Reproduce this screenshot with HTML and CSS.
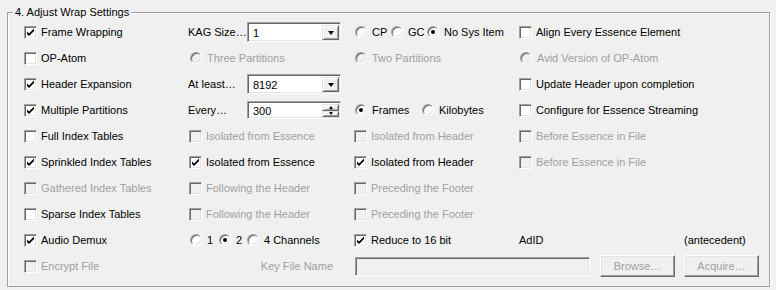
FILE: index.html
```html
<!DOCTYPE html>
<html>
<head>
<meta charset="utf-8">
<link rel="stylesheet" href="styles.css">
</head>
<body>
<fieldset class="group">
  <legend class="title">4. Adjust Wrap Settings</legend>
  <div class="grid">
    <!-- row 1 -->
    <label class="chk"><span class="box"><svg class="mark" viewBox="0 0 11 11"><path d="M2 4.5 L2 7 L4 9 L9 4 L9 1.5 L4 6.5 Z"/></svg></span>Frame Wrapping</label>
    <div class="field"><span class="flabel">KAG Size…</span><div class="combo"><span class="val">1</span><span class="drop"><span class="tri"></span></span></div></div>
    <div class="radios c3">
      <label class="rad w36"><span class="circle"></span>CP</label>
      <label class="rad w36"><span class="circle"></span>GC</label>
      <label class="rad"><span class="circle on"></span>No Sys Item</label>
    </div>
    <label class="chk"><span class="box"></span>Align Every Essence Element</label>

    <!-- row 2 -->
    <label class="chk"><span class="box"></span>OP-Atom</label>
    <label class="rad dis c2r"><span class="circle"></span>Three Partitions</label>
    <label class="rad dis c3"><span class="circle"></span>Two Partitions</label>
    <label class="rad dis c4r"><span class="circle"></span>Avid Version of OP-Atom</label>

    <!-- row 3 -->
    <label class="chk"><span class="box"><svg class="mark" viewBox="0 0 11 11"><path d="M2 4.5 L2 7 L4 9 L9 4 L9 1.5 L4 6.5 Z"/></svg></span>Header Expansion</label>
    <div class="field"><span class="flabel">At least…</span><div class="combo"><span class="val">8192</span><span class="drop"><span class="tri"></span></span></div></div>
    <span></span>
    <label class="chk"><span class="box"></span>Update Header upon completion</label>

    <!-- row 4 -->
    <label class="chk"><span class="box"><svg class="mark" viewBox="0 0 11 11"><path d="M2 4.5 L2 7 L4 9 L9 4 L9 1.5 L4 6.5 Z"/></svg></span>Multiple Partitions</label>
    <div class="field"><span class="flabel">Every…</span><div class="spin"><span class="val">300</span><span class="spinbtns"><span class="sb"><span class="tri up"></span></span><span class="sb"><span class="tri sm"></span></span></span></div></div>
    <div class="radios c3">
      <label class="rad w67"><span class="circle on"></span>Frames</label>
      <label class="rad"><span class="circle"></span>Kilobytes</label>
    </div>
    <label class="chk"><span class="box"></span>Configure for Essence Streaming</label>

    <!-- row 5 -->
    <label class="chk"><span class="box"></span>Full Index Tables</label>
    <label class="chk dis c2"><span class="box"></span>Isolated from Essence</label>
    <label class="chk dis"><span class="box"></span>Isolated from Header</label>
    <label class="chk dis"><span class="box"></span>Before Essence in File</label>

    <!-- row 6 -->
    <label class="chk"><span class="box"><svg class="mark" viewBox="0 0 11 11"><path d="M2 4.5 L2 7 L4 9 L9 4 L9 1.5 L4 6.5 Z"/></svg></span>Sprinkled Index Tables</label>
    <label class="chk c2"><span class="box"><svg class="mark" viewBox="0 0 11 11"><path d="M2 4.5 L2 7 L4 9 L9 4 L9 1.5 L4 6.5 Z"/></svg></span>Isolated from Essence</label>
    <label class="chk"><span class="box"><svg class="mark" viewBox="0 0 11 11"><path d="M2 4.5 L2 7 L4 9 L9 4 L9 1.5 L4 6.5 Z"/></svg></span>Isolated from Header</label>
    <label class="chk dis"><span class="box"></span>Before Essence in File</label>

    <!-- row 7 -->
    <label class="chk dis"><span class="box"></span>Gathered Index Tables</label>
    <label class="chk dis c2"><span class="box"></span>Following the Header</label>
    <label class="chk dis"><span class="box"></span>Preceding the Footer</label>
    <span></span>

    <!-- row 8 -->
    <label class="chk"><span class="box"></span>Sparse Index Tables</label>
    <label class="chk dis c2"><span class="box"></span>Following the Header</label>
    <label class="chk dis"><span class="box"></span>Preceding the Footer</label>
    <span></span>

    <!-- row 9 -->
    <label class="chk"><span class="box"><svg class="mark" viewBox="0 0 11 11"><path d="M2 4.5 L2 7 L4 9 L9 4 L9 1.5 L4 6.5 Z"/></svg></span>Audio Demux</label>
    <div class="radios c2r">
      <label class="rad w29"><span class="circle"></span>1</label>
      <label class="rad w28"><span class="circle on"></span>2</label>
      <label class="rad"><span class="circle"></span>4 Channels</label>
    </div>
    <label class="chk"><span class="box"><svg class="mark" viewBox="0 0 11 11"><path d="M2 4.5 L2 7 L4 9 L9 4 L9 1.5 L4 6.5 Z"/></svg></span>Reduce to 16 bit</label>
    <div class="adid"><span class="adlabel">AdID</span><span>(antecedent)</span></div>

    <!-- row 10 -->
    <label class="chk dis"><span class="box"></span>Encrypt File</label>
    <span class="keylabel dis">Key File Name</span>
    <div class="keyrow">
      <span class="textbox"></span>
      <button class="btn" disabled>Browse…</button>
      <button class="btn" disabled>Acquire…</button>
    </div>
  </div>
</fieldset>
</body>
</html>
```

FILE: styles.css
```css
* { box-sizing: border-box; }

html, body {
  margin: 0;
  background: #f0f0f0;
}

body {
  font: 11px "Liberation Sans", Arial, sans-serif;
  color: #000;
}

.group {
  margin: 6px 6px 0 7px;
  padding: 0 0 7px 0;
  border: 1px solid #a0a0a0;
  box-shadow: inset 1px 1px 0 #fff, 1px 1px 0 #fff;
  min-width: 0;
}

.title {
  margin-left: 5px;
  padding: 0 2px;
  line-height: 13px;
  height: 13px;
}

.grid {
  display: grid;
  grid-template-columns: 164px 166px 165px 1fr;
  grid-auto-rows: 26px;
  align-items: center;
  padding-left: 16px;
}

.chk, .rad {
  display: flex;
  align-items: center;
  white-space: nowrap;
}

.chk { gap: 4px; }
.rad { gap: 5px; }

.c2 { margin-left: 1px; }
.c2r { margin-left: 2px; }
.c3 { margin-left: 1px; }
.c4r { margin-left: 1px; }

.dis { color: #a0a0a0; }

.box {
  width: 13px;
  height: 13px;
  flex: none;
  background: #fff;
  border: 1px solid;
  border-color: #a0a0a0 #fff #fff #a0a0a0;
  box-shadow: inset 1px 1px 0 #696969, inset -1px -1px 0 #e3e3e3;
  display: flex;
  align-items: center;
  justify-content: center;
}

.dis .box { background: #f0f0f0; }

.mark {
  width: 11px;
  height: 11px;
  fill: #000;
}

.circle {
  width: 12px;
  height: 12px;
  flex: none;
  border-radius: 50%;
  background: #fff;
  border: 1px solid;
  border-color: #a0a0a0 #fff #fff #a0a0a0;
  box-shadow: inset 1px 1px 0 #696969, inset -1px -1px 0 #e3e3e3;
  display: flex;
  align-items: center;
  justify-content: center;
}

.dis .circle { background: #f0f0f0; }

.circle.on::after {
  content: "";
  width: 4px;
  height: 4px;
  border-radius: 50%;
  background: #000;
}

.radios {
  display: flex;
  align-items: center;
}

.w36 { width: 36px; }
.w67 { width: 67px; }
.w29 { width: 29px; }
.w28 { width: 28px; }

.field {
  display: flex;
  align-items: center;
}

.flabel {
  width: 59px;
  flex: none;
  white-space: nowrap;
}

.combo, .spin {
  width: 94px;
  height: 20px;
  background: #fff;
  border: 1px solid;
  border-color: #a0a0a0 #fff #fff #a0a0a0;
  box-shadow: inset 1px 1px 0 #696969, inset -1px -1px 0 #e3e3e3;
  display: flex;
  align-items: stretch;
  padding: 2px 1px 1px 2px;
}

.spin { height: 18px; }

.val {
  flex: 1;
  padding-left: 3px;
  display: flex;
  align-items: center;
}

.drop, .sb {
  width: 17px;
  background: #f0f0f0;
  border: 1px solid;
  border-color: #e3e3e3 #696969 #696969 #e3e3e3;
  box-shadow: inset 1px 1px 0 #fff, inset -1px -1px 0 #a0a0a0;
  display: flex;
  align-items: center;
  justify-content: center;
}

.spinbtns {
  width: 17px;
  display: flex;
  flex-direction: column;
}

.sb { flex: 1; width: 17px; }

.tri {
  width: 0;
  height: 0;
  border-left: 3.5px solid transparent;
  border-right: 3.5px solid transparent;
  border-top: 4px solid #000;
}

.tri.up {
  border-top: 0;
  border-left-width: 2.5px;
  border-right-width: 2.5px;
  border-bottom: 3px solid #000;
}

.tri.sm {
  border-left-width: 2.5px;
  border-right-width: 2.5px;
  border-top-width: 3px;
}

.adid {
  display: flex;
  align-items: center;
}

.adlabel { width: 165px; }

.keylabel {
  text-align: right;
  padding-right: 21px;
  white-space: nowrap;
}

.keyrow {
  grid-column: 3 / 5;
  display: flex;
  align-items: center;
  margin-left: 1px;
}

.textbox {
  width: 235px;
  height: 19px;
  background: #f0f0f0;
  border: 1px solid;
  border-color: #a0a0a0 #fff #fff #a0a0a0;
  box-shadow: inset 1px 1px 0 #696969, inset -1px -1px 0 #e3e3e3;
  margin-right: 10px;
}

.btn {
  width: 75px;
  height: 22px;
  margin: 0 9px 0 0;
  padding: 0;
  font: inherit;
  color: #a0a0a0;
  background: #f0f0f0;
  border: 1px solid;
  border-color: #fff #696969 #696969 #fff;
  box-shadow: inset -1px -1px 0 #a0a0a0, inset 1px 1px 0 #e3e3e3;
}
```
